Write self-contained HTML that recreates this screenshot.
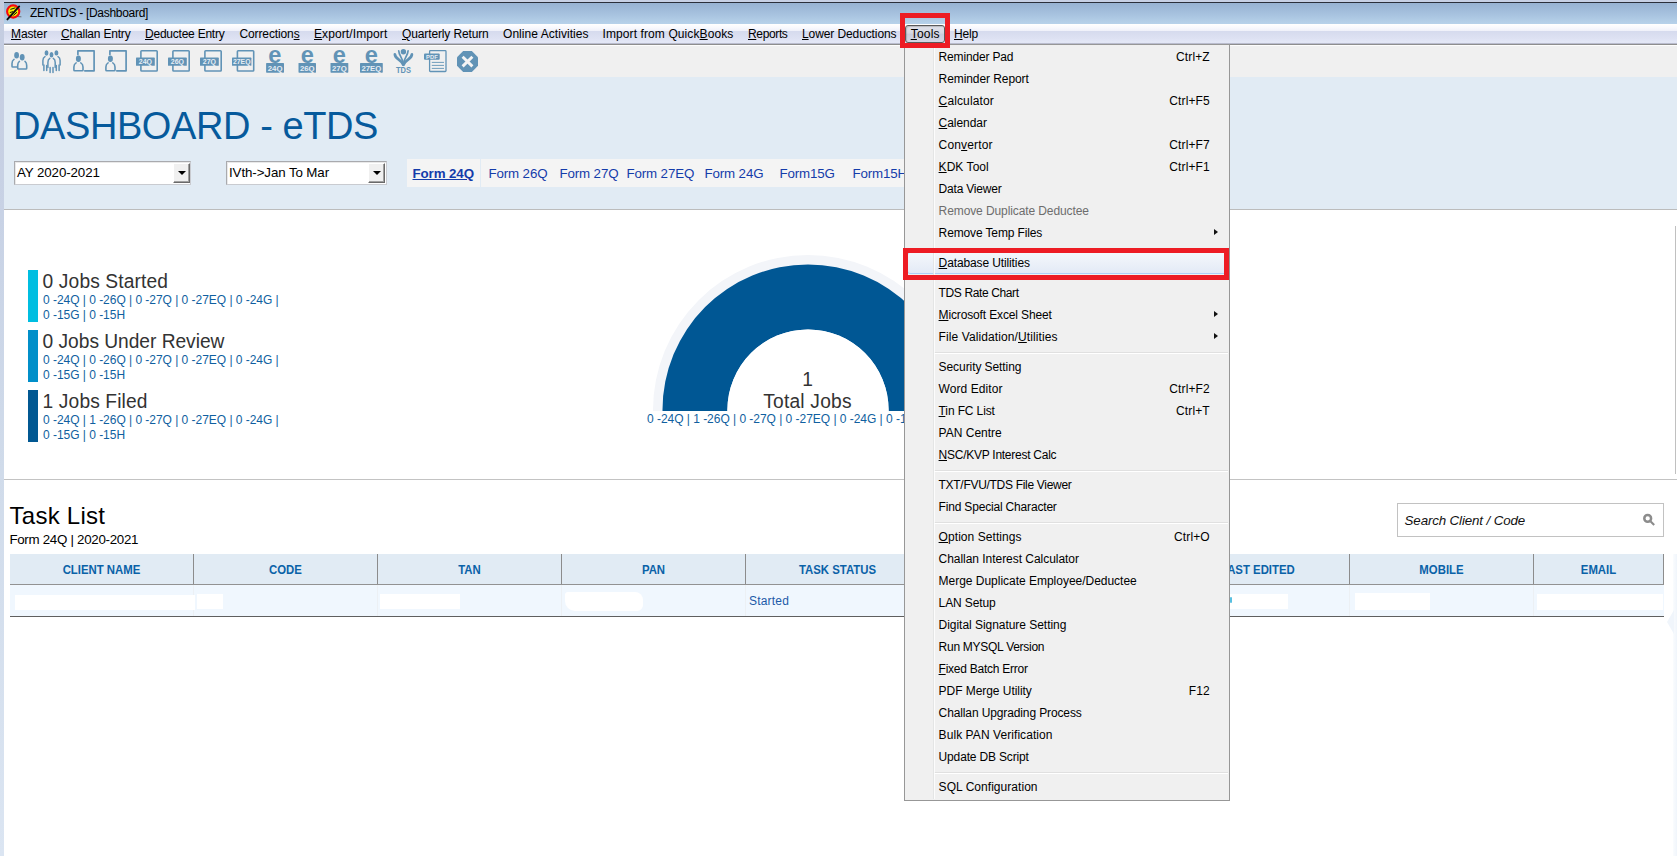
<!DOCTYPE html>
<html lang="en">
<head>
<meta charset="utf-8">
<title>ZENTDS - [Dashboard]</title>
<style>
*{box-sizing:border-box;margin:0;padding:0}
html,body{width:1677px;height:856px;overflow:hidden;background:#fff}
body{position:relative;font-family:"Liberation Sans",Arial,sans-serif;font-size:12px;color:#000}
.abs{position:absolute}
.t{position:absolute;white-space:pre;line-height:1}
u{text-decoration:underline;text-underline-offset:1px}
/* window chrome */
#topstrip{left:0;top:0;width:1677px;height:2px;background:#c7d0e4}
#topline{left:4px;top:2px;width:1673px;height:1px;background:#2b2f3a}
#leftstrip{left:0;top:0;width:4px;height:856px;background:linear-gradient(180deg,#c4cce0 0,#c8d2e5 25%,#d0dbea 55%,#dbe5f2 100%)}
#title{left:4px;top:3px;width:1673px;height:21px;background:linear-gradient(#97b2d2 0,#a6c1de 50%,#b7d2ea 100%)}
#menubar{left:4px;top:24px;width:1673px;height:20px;background:linear-gradient(#ffffff 0,#f7f8fd 20%,#eef0f9 36%,#d6dbee 37%,#dde1f2 70%,#e4e8f7 92%,#c9cddf 100%)}
#mbline1{left:4px;top:43px;width:1673px;height:1px;background:#b9bccd}
#mbline2{left:4px;top:44px;width:1673px;height:1px;background:#8e8e8e}
#mbline3{left:4px;top:45px;width:1673px;height:1px;background:#fdfdfd}
#toolbar{left:4px;top:46px;width:1673px;height:31px;background:#f0f0f0}
#bluepanel{left:4px;top:77px;width:1673px;height:132px;background:#e1ebf4}
#blueline{left:4px;top:209px;width:1673px;height:1px;background:#bcbcbc}
.mi{position:absolute;top:24px;height:20px;line-height:20px;font-size:12px;white-space:pre;color:#000}

.combo{background:#fff;border:1px solid #a9aaae;border-right-color:#c9cbd0;border-bottom-color:#c9cbd0;box-shadow:inset 1px 1px 0 #e9e9e9}
.cbtn{width:17px;height:20px;background:#f0f0f0;border-top:1px solid #fff;border-left:1px solid #fff;border-right:1px solid #696969;border-bottom:1px solid #696969;box-shadow:inset -1px -1px 0 #a0a0a0}
.cbtn i{position:absolute;left:3.5px;top:7px;width:0;height:0;border-left:4px solid transparent;border-right:4px solid transparent;border-top:4px solid #000}
.tab{top:166.7px;font-size:13.33px;color:#143caa;letter-spacing:-0.12px}
.jh{left:42.6px;font-size:19.2px;color:#333;letter-spacing:0.13px;transform:scaleY(1.06);transform-origin:0 84.65%}
.js{left:43px;font-size:12px;color:#105fa0;letter-spacing:-0.03px}

.vs{top:554px;width:1px;height:30px;background:#8c8c8c}
.vs2{top:585px;width:1px;height:31px;background:#ecf0f4}
.th{top:564.3px;font-size:12px;font-weight:bold;color:#0a62a8;text-align:center;transform:scaleX(0.948);transform-origin:50% 50%}
.wb{background:#fff}
#menu{left:904px;top:44px;width:326px;height:757px;border:1px solid #979797;background:#f0f0f0;z-index:0}
#gutter{left:28px;top:2px;width:2px;height:752px;border-left:1px solid #e2e3e3;background:#fff;z-index:1;opacity:0.8}
.mrow{position:absolute;left:0;width:324px;height:22px;line-height:19px;font-size:12px;white-space:pre}
.ml{position:absolute;left:33.6px;top:1px}
.sc{position:absolute;right:19.2px;top:1px;letter-spacing:0.12px}
.arr{position:absolute;left:309px;top:5.8px;width:0;height:0;border-left:4.5px solid #111;border-top:3.8px solid transparent;border-bottom:3.8px solid transparent}
.msep{position:absolute;left:29px;width:294px;height:2px;border-top:1px solid #e0e0e0;background:#fff}
.mhl{position:absolute;left:2px;width:320px;height:22px;margin-top:-1px;border:1px solid #aecff7;border-radius:3px;background:linear-gradient(#f4f7fb,#e3eaf6)}
.dis{color:#6d6d6d}
#toolsbtn{left:905px;top:25px;width:40px;height:18px;border:1px solid #5a5a5a;border-radius:3px;background:linear-gradient(#e2e3ea 0,#d5d7e2 45%,#c9ccdb 50%,#d3d6e4 100%);box-shadow:inset 1px 1px 1px rgba(0,0,0,0.18)}
.redbox{border:5px solid #ed1c24}
</style>
</head>
<body>
<div class="abs" id="topstrip"></div>
<div class="abs" id="title"></div>
<div class="abs" id="topline"></div>
<div class="abs" id="menubar"></div>
<div class="abs" id="mbline1"></div>
<div class="abs" id="mbline2"></div>
<div class="abs" id="mbline3"></div>
<div class="abs" id="toolbar"></div>
<div class="abs" id="bluepanel"></div>
<div class="abs" id="blueline"></div>
<div class="abs" id="leftstrip"></div>

<!-- TITLE TEXT -->
<div class="t" style="left:30px;top:7px;font-size:12px;letter-spacing:-0.3px">ZENTDS - [Dashboard]</div>

<!-- MENUBAR ITEMS -->
<div class="mi" style="left:11px;letter-spacing:-0.11px"><u>M</u>aster</div>
<div class="mi" style="left:61px;letter-spacing:-0.2px"><u>C</u>hallan Entry</div>
<div class="mi" style="left:145px;letter-spacing:-0.23px"><u>D</u>eductee Entry</div>
<div class="mi" style="left:239.5px;letter-spacing:-0.12px">Correction<u>s</u></div>
<div class="mi" style="left:314px;letter-spacing:0.1px"><u>E</u>xport/Import</div>
<div class="mi" style="left:402px;letter-spacing:-0.13px"><u>Q</u>uarterly Return</div>
<div class="mi" style="left:503px;letter-spacing:0.05px">Online Activities</div>
<div class="mi" style="left:602.5px;letter-spacing:0.1px">Import from Quick<u>B</u>ooks</div>
<div class="mi" style="left:748px;letter-spacing:-0.36px"><u>R</u>eports</div>
<div class="mi" style="left:802px;letter-spacing:-0.1px"><u>L</u>ower Deductions</div>
<div class="mi" style="left:954px;letter-spacing:-0.17px"><u>H</u>elp</div>

<!--TOOLBAR-ICONS-->
<svg class="abs" style="left:0;top:0" width="500" height="80" viewBox="0 0 500 80" font-family="'Liberation Sans',Arial,sans-serif">
<!-- app icon -->
<g>
<circle cx="13.2" cy="11.5" r="6.1" fill="#f2ec00" stroke="#f60a0e" stroke-width="2.1"/>
<path d="M10.4 9.4 L15.4 7.8 M9.8 12.6 L13 11.6 M13.4 15.4 L17 12.2 M11.6 15.8 L12.6 13.2" stroke="#111" stroke-width="1" fill="none"/>
<path d="M7.4 19.4 L19.2 6.4" stroke="#0c0c0c" stroke-width="1.9" stroke-linecap="round"/>
<path d="M17.4 16.6 L21.4 16.8" stroke="#555" stroke-width="0.8"/>
</g>
<g fill="none" stroke="#6193b6" stroke-width="1.6" stroke-linecap="round" stroke-linejoin="round">
<!-- 1: two people -->
<path d="M14 59.4 Q12 60.6 12 63.6 V66.2 Q12 67 12.8 67 H17.2"/>
<path d="M19.4 61.4 Q17.7 62.6 17.7 65.6 V68.2 Q17.7 69 18.5 69 H25.9 Q26.7 69 26.7 68.2 V65.6 Q26.7 62.6 25 61.4"/>
<!-- 2: three people -->
<g stroke-width="1.5">
<path d="M45 56.6 Q42.9 57.6 42.9 60.4 V65"/><path d="M43.9 65 V70.4 M46.7 65.5 V70.4"/>
<path d="M58 56.6 Q60.1 57.6 60.1 60.4 V65"/><path d="M59.1 65 V70.4 M56.3 65.5 V70.4"/>
<path d="M49.8 58.4 Q47.9 59.6 47.9 62.4 V67.4 M53.3 58.4 Q55.2 59.6 55.2 62.4 V67.4"/><path d="M50.1 67.6 V72.4 M53 67.6 V72.4"/>
</g>
<!-- 3,4: person + doc -->
<g id="pd">
<path d="M77.9 54.4 V50.8 H94.1 V70.8 H84.8" stroke-width="1.7" stroke-linejoin="round"/>
<path d="M76.1 62.9 Q73.9 64.1 73.9 67.1 V70 Q73.9 70.8 74.7 70.8 H82.2 Q83 70.8 83 70 V67.1 Q83 64.1 80.8 62.9"/>
<ellipse cx="78.4" cy="58.8" rx="2.5" ry="3.3" fill="#6193b6" stroke="none"/>
</g>
<use href="#pd" x="32"/>
<!-- 5-8 docs -->
<rect x="140.9" y="50.8" width="16.3" height="20.2" rx="0.8"/>
<rect x="172.9" y="50.8" width="16.3" height="20.2" rx="0.8"/>
<rect x="204.9" y="50.8" width="16.3" height="20.2" rx="0.8"/>
<rect x="237.4" y="50.8" width="16.3" height="20.2" rx="0.8"/>
<!-- 14 pdf doc -->
<rect x="429.6" y="50.7" width="16.4" height="20.8" rx="0.8" stroke-width="1.3"/>
<path d="M432.2 62.4 H443.6 M432.2 65.4 H443.6 M432.2 68.4 H443.6" stroke-width="0.9"/>
</g>
<g fill="#6193b6">
<ellipse cx="16.6" cy="55.3" rx="2.4" ry="3.3"/><ellipse cx="22.2" cy="57.3" rx="2.4" ry="3.3"/>
<ellipse cx="46.5" cy="53" rx="1.95" ry="2.7"/><ellipse cx="51.5" cy="54.7" rx="1.95" ry="2.7"/><ellipse cx="56.4" cy="52.9" rx="1.95" ry="2.7"/>
<rect x="136" y="57.6" width="18.8" height="8.2" rx="0.6"/>
<rect x="168" y="57.6" width="18.8" height="8.2" rx="0.6"/>
<rect x="200" y="57.6" width="18.8" height="8.2" rx="0.6"/>
<rect x="232" y="57.6" width="19.4" height="8.2" rx="0.6"/>
<rect x="266.1" y="63" width="17.9" height="9.7" rx="0.6"/>
<rect x="298.5" y="63" width="17.5" height="9.7" rx="0.6"/>
<rect x="330.5" y="63" width="17.8" height="9.7" rx="0.6"/>
<rect x="360" y="63" width="22.8" height="9.7" rx="0.6"/>
<rect x="424" y="53.5" width="15.7" height="6.3" rx="1"/>
<!-- 13 TDS logo -->
<circle cx="403.4" cy="51.8" r="2.7"/>
<g fill="none" stroke="#6193b6" stroke-linecap="round">
<path d="M398.7 50.8 C398.9 55.2 402.3 57.6 403 62.6" stroke-width="1.7"/>
<path d="M408.1 50.8 C407.9 55.2 404.5 57.6 403.8 62.6" stroke-width="1.7"/>
<path d="M394.9 54.3 C394.7 59 401.4 59.2 403.1 64.6" stroke-width="2.7"/>
<path d="M411.9 54.3 C412.1 59 405.4 59.2 403.7 64.6" stroke-width="2.7"/>
<path d="M403.4 62 V65.6" stroke-width="1.1"/>
</g>
<!-- 15 octagon -->
<polygon points="463.15,51 471.85,51 478,57.15 478,65.85 471.85,72 463.15,72 457,65.85 457,57.15"/>
</g>
<path d="M462.6 56.8 L472.4 66.4 M472.4 56.8 L462.6 66.4" stroke="#f4f4f4" stroke-width="2.9" fill="none"/>
<g fill="#e6edf4" font-weight="bold" text-anchor="middle">
<text x="145.4" y="64.4" font-size="7">24Q</text>
<text x="177.4" y="64.4" font-size="7">26Q</text>
<text x="209.4" y="64.4" font-size="7">27Q</text>
<text x="241.7" y="64.3" font-size="6.6" textLength="17.6" lengthAdjust="spacingAndGlyphs">27EQ</text>
<text x="275.1" y="70.7" font-size="7.8">24Q</text>
<text x="307.3" y="70.7" font-size="7.8">26Q</text>
<text x="339.4" y="70.7" font-size="7.8">27Q</text>
<text x="371.4" y="70.7" font-size="7.8" textLength="20" lengthAdjust="spacingAndGlyphs">27EQ</text>
<text x="431.9" y="59" font-size="5.8">PDF</text>
</g>
<g fill="#6193b6" font-weight="bold" text-anchor="middle">
<text x="274.8" y="62.8" font-size="23.6">e</text>
<text x="307.4" y="62.8" font-size="23.6">e</text>
<text x="339.4" y="62.8" font-size="23.6">e</text>
<text x="371.4" y="62.8" font-size="23.6">e</text>
<text x="403.5" y="72.5" font-size="8.6" textLength="15" lengthAdjust="spacingAndGlyphs">TDS</text>
</g>
</svg>
<!--/TOOLBAR-ICONS-->
<!--DASHBOARD-->
<div class="t" style="left:13px;top:106.8px;font-size:38px;letter-spacing:-0.41px;color:#065a9c">DASHBOARD - eTDS</div>
<!-- combo 1 -->
<div class="abs combo" style="left:14px;top:161px;width:177px;height:24px"><div class="t" style="left:2px;top:3.6px;font-size:13.33px;letter-spacing:-0.1px">AY 2020-2021</div><div class="abs cbtn" style="left:158px;top:1px"><i></i></div></div>
<!-- combo 2 -->
<div class="abs combo" style="left:226px;top:161px;width:161px;height:24px"><div class="t" style="left:2px;top:3.6px;font-size:13.33px;letter-spacing:-0.1px">IVth-&gt;Jan To Mar</div><div class="abs cbtn" style="left:141px;top:1px"><i></i></div></div>
<!-- tabs -->
<div class="abs" style="left:407px;top:159px;width:530px;height:28px;background:#f4f4f4"></div>
<div class="abs" style="left:480px;top:159px;width:1px;height:28px;background:#e1ebf4"></div>
<div class="t tab" style="left:412.5px;font-weight:bold;text-decoration:underline;letter-spacing:-0.1px">Form 24Q</div>
<div class="t tab" style="left:488.4px">Form 26Q</div>
<div class="t tab" style="left:559.4px">Form 27Q</div>
<div class="t tab" style="left:626.4px">Form 27EQ</div>
<div class="t tab" style="left:704.4px">Form 24G</div>
<div class="t tab" style="left:779.4px">Form15G</div>
<div class="t tab" style="left:852.4px">Form15H</div>
<!--/DASHBOARD-->
<!--JOBS-->
<div class="abs" style="left:28px;top:270px;width:10px;height:52px;background:#00bee1"></div>
<div class="abs" style="left:28px;top:330px;width:10px;height:52px;background:#018fc9"></div>
<div class="abs" style="left:28px;top:390px;width:10px;height:52px;background:#015892"></div>
<div class="t jh" style="top:272.4px">0 Jobs Started</div>
<div class="t js" style="top:293.8px">0 -24Q | 0 -26Q | 0 -27Q | 0 -27EQ | 0 -24G |</div>
<div class="t js" style="top:308.8px">0 -15G | 0 -15H</div>
<div class="t jh" style="top:332.4px;letter-spacing:-0.03px">0 Jobs Under Review</div>
<div class="t js" style="top:353.8px">0 -24Q | 0 -26Q | 0 -27Q | 0 -27EQ | 0 -24G |</div>
<div class="t js" style="top:368.8px">0 -15G | 0 -15H</div>
<div class="t jh" style="top:392.4px">1 Jobs Filed</div>
<div class="t js" style="top:413.8px">0 -24Q | 1 -26Q | 0 -27Q | 0 -27EQ | 0 -24G |</div>
<div class="t js" style="top:428.8px">0 -15G | 0 -15H</div>
<!--/JOBS-->
<!--DONUT-->
<svg class="abs" style="left:640px;top:240px" width="340" height="171" viewBox="640 240 340 171">
<path d="M653 411 V410 A155 155 0 0 1 963 410 V411 Z" fill="#f3f5f9"/>
<path d="M662.5 411 V410 A145.5 145.5 0 0 1 953.5 410 V411 H888.6 V410 A80.6 80.6 0 0 0 727.4 410 V411 Z" fill="#005794"/>
<path d="M727.4 411 V410 A80.6 80.6 0 0 1 888.6 410 V411 Z" fill="#fff"/>
</svg>
<div class="t" style="left:707.5px;width:200px;text-align:center;top:370.2px;font-size:19.2px;color:#333;transform:scaleY(1.06);transform-origin:0 84.65%">1</div>
<div class="t" style="left:707.5px;width:200px;text-align:center;top:392.2px;font-size:19.2px;color:#333;letter-spacing:0.2px;transform:scaleY(1.06);transform-origin:0 84.65%">Total Jobs</div>
<div class="t js" style="left:647px;top:412.8px">0 -24Q | 1 -26Q | 0 -27Q | 0 -27EQ | 0 -24G | 0 -15G | 0 -15H</div>
<!--/DONUT-->
<!--TASKLIST-->
<div class="abs" style="left:4px;top:479px;width:1673px;height:1px;background:#c3c3c3"></div>
<div class="abs" style="left:1675px;top:226px;width:1px;height:248px;background:#c0c0c0"></div>
<div class="t" style="left:9.6px;top:503.6px;font-size:24px;letter-spacing:0.25px">Task List</div>
<div class="t" style="left:9.4px;top:532.6px;font-size:13.33px;letter-spacing:-0.29px">Form 24Q | 2020-2021</div>
<!-- search box -->
<div class="abs" style="left:1397px;top:503px;width:267px;height:34px;border:1px solid #c2c2c2;background:#fff"></div>
<div class="t" style="left:1404.6px;top:513.6px;font-size:13.33px;font-style:italic;letter-spacing:-0.13px;color:#111">Search Client / Code</div>
<svg class="abs" style="left:1641px;top:512px" width="16" height="16" viewBox="0 0 16 16"><circle cx="6.7" cy="6.4" r="3.4" fill="none" stroke="#8c8c8c" stroke-width="2.5"/><path d="M9.7 9.5 L13.2 13" stroke="#8c8c8c" stroke-width="2.1" stroke-linecap="butt"/></svg>
<!-- table -->
<div class="abs" style="left:10px;top:554px;width:1654px;height:30px;background:#e1ebf4"></div>
<div class="abs" style="left:10px;top:584px;width:1654px;height:1px;background:#929292"></div>
<div class="abs" style="left:10px;top:585px;width:1654px;height:31px;background:#f0f7fe"></div>
<div class="abs" style="left:10px;top:616px;width:1654px;height:1px;background:#5f5f5f"></div>
<div class="abs vs" style="left:193px"></div><div class="abs vs" style="left:377px"></div><div class="abs vs" style="left:561px"></div><div class="abs vs" style="left:745px"></div><div class="abs vs" style="left:1349px"></div><div class="abs vs" style="left:1533px"></div><div class="abs vs" style="left:1663px"></div>
<div class="abs vs2" style="left:193px"></div><div class="abs vs2" style="left:377px"></div><div class="abs vs2" style="left:561px"></div><div class="abs vs2" style="left:745px"></div><div class="abs vs2" style="left:1349px"></div><div class="abs vs2" style="left:1533px"></div>
<div class="t th" style="left:10px;width:183px">CLIENT NAME</div>
<div class="t th" style="left:194px;width:183px">CODE</div>
<div class="t th" style="left:378px;width:183px">TAN</div>
<div class="t th" style="left:562px;width:183px">PAN</div>
<div class="t th" style="left:746px;width:183px">TASK STATUS</div>
<div class="t th" style="left:1166px;width:183px">LAST EDITED</div>
<div class="t th" style="left:1350px;width:183px">MOBILE</div>
<div class="t th" style="left:1534px;width:129px">EMAIL</div>
<div class="t" style="left:749px;top:594.6px;font-size:12px;letter-spacing:0.2px;color:#1c5aa8">Started</div>
<!-- redaction blobs -->
<div class="abs wb" style="left:15px;top:595px;width:180px;height:15px"></div>
<div class="abs wb" style="left:197px;top:594px;width:26px;height:15px"></div>
<div class="abs wb" style="left:380px;top:594px;width:80px;height:15px"></div>
<div class="abs wb" style="left:565px;top:592px;width:78px;height:19px;border-radius:3px 8px 6px 10px"></div>
<div class="abs wb" style="left:1230px;top:594px;width:58px;height:15px"></div>
<div class="abs wb" style="left:1355px;top:593px;width:75px;height:17px"></div>
<div class="abs wb" style="left:1537px;top:594px;width:126px;height:16px"></div>
<div class="abs" style="left:1230px;top:597px;width:2px;height:6px;background:#58bfe0;border-radius:1px"></div>
<!-- right edge strip -->
<div class="abs" style="left:1673px;top:554px;width:4px;height:302px;background:linear-gradient(90deg,#fafcfe,#f0f5fb)"></div>
<svg class="abs" style="left:1664px;top:606px" width="12" height="34" viewBox="0 0 12 34"><path d="M3 16 L10 4 V28 Z" fill="#f0f5fb"/></svg>
<!--/TASKLIST-->
<!--MENU-->
<div class="abs" id="menu">
<div class="abs" id="gutter"></div>
<div class="mrow" style="top:2px"><span class="ml" style="letter-spacing:-0.16px">Reminder Pad</span><span class="sc">Ctrl+Z</span></div>
<div class="mrow" style="top:24px"><span class="ml" style="letter-spacing:-0.08px">Reminder Report</span></div>
<div class="mrow" style="top:46px"><span class="ml" style="letter-spacing:0.12px"><u>C</u>alculator</span><span class="sc">Ctrl+F5</span></div>
<div class="mrow" style="top:68px"><span class="ml" style="letter-spacing:-0.06px"><u>C</u>alendar</span></div>
<div class="mrow" style="top:90px"><span class="ml" style="letter-spacing:0.16px">Con<u>v</u>ertor</span><span class="sc">Ctrl+F7</span></div>
<div class="mrow" style="top:112px"><span class="ml" style="letter-spacing:0.05px"><u>K</u>DK Tool</span><span class="sc">Ctrl+F1</span></div>
<div class="mrow" style="top:134px"><span class="ml" style="letter-spacing:-0.21px">Data Viewer</span></div>
<div class="mrow dis" style="top:156px"><span class="ml" style="letter-spacing:-0.10px">Remove Duplicate Deductee</span></div>
<div class="mrow" style="top:178px"><span class="ml" style="letter-spacing:-0.13px">Remove Temp Files</span><i class="arr"></i></div>
<div class="msep" style="top:203px"></div>
<div class="mhl" style="top:208px"></div>
<div class="mrow" style="top:208px"><span class="ml" style="letter-spacing:-0.12px"><u>D</u>atabase Utilities</span></div>
<div class="msep" style="top:233px"></div>
<div class="mrow" style="top:238px"><span class="ml" style="letter-spacing:-0.38px">TDS Rate Chart</span></div>
<div class="mrow" style="top:260px"><span class="ml" style="letter-spacing:-0.14px"><u>M</u>icrosoft Excel Sheet</span><i class="arr"></i></div>
<div class="mrow" style="top:282px"><span class="ml" style="letter-spacing:0.10px">File Validation/<u>U</u>tilities</span><i class="arr"></i></div>
<div class="msep" style="top:307px"></div>
<div class="mrow" style="top:312px"><span class="ml" style="letter-spacing:-0.08px">Security Setting</span></div>
<div class="mrow" style="top:334px"><span class="ml" style="letter-spacing:0.08px">Word Editor</span><span class="sc">Ctrl+F2</span></div>
<div class="mrow" style="top:356px"><span class="ml" style="letter-spacing:-0.13px"><u>T</u>in FC List</span><span class="sc">Ctrl+T</span></div>
<div class="mrow" style="top:378px"><span class="ml" style="letter-spacing:-0.00px">PAN Centre</span></div>
<div class="mrow" style="top:400px"><span class="ml" style="letter-spacing:-0.26px"><u>N</u>SC/KVP Interest Calc</span></div>
<div class="msep" style="top:425px"></div>
<div class="mrow" style="top:430px"><span class="ml" style="letter-spacing:-0.30px">TXT/FVU/TDS File Viewer</span></div>
<div class="mrow" style="top:452px"><span class="ml" style="letter-spacing:-0.18px">Find Special Character</span></div>
<div class="msep" style="top:477px"></div>
<div class="mrow" style="top:482px"><span class="ml" style="letter-spacing:0.06px"><u>O</u>ption Settings</span><span class="sc">Ctrl+O</span></div>
<div class="mrow" style="top:504px"><span class="ml" style="letter-spacing:-0.04px">Challan Interest Calculator</span></div>
<div class="mrow" style="top:526px"><span class="ml" style="letter-spacing:-0.02px">Merge Duplicate Employee/Deductee</span></div>
<div class="mrow" style="top:548px"><span class="ml" style="letter-spacing:-0.12px">LAN Setup</span></div>
<div class="mrow" style="top:570px"><span class="ml" style="letter-spacing:-0.04px">Digital Signature Setting</span></div>
<div class="mrow" style="top:592px"><span class="ml" style="letter-spacing:-0.27px">Run MYSQL Version</span></div>
<div class="mrow" style="top:614px"><span class="ml" style="letter-spacing:-0.25px"><u>F</u>ixed Batch Error</span></div>
<div class="mrow" style="top:636px"><span class="ml" style="letter-spacing:-0.05px">PDF Merge Utility</span><span class="sc">F12</span></div>
<div class="mrow" style="top:658px"><span class="ml" style="letter-spacing:-0.12px">Challan Upgrading Process</span></div>
<div class="mrow" style="top:680px"><span class="ml" style="letter-spacing:0.07px">Bulk PAN Verification</span></div>
<div class="mrow" style="top:702px"><span class="ml" style="letter-spacing:-0.16px">Update DB Script</span></div>
<div class="msep" style="top:727px"></div>
<div class="mrow" style="top:732px"><span class="ml" style="letter-spacing:0.04px">SQL Configuration</span></div>
</div>
<div class="abs" id="toolsbtn"><span class="t" style="left:4.7px;top:1.8px;font-size:12px;letter-spacing:0.2px"><u>T</u>ools</span></div>
<div class="abs redbox" style="left:900px;top:13px;width:50px;height:35px"></div>
<div class="abs redbox" style="left:903px;top:248px;width:326px;height:32px"></div>
<!--/MENU-->
</body>
</html>
